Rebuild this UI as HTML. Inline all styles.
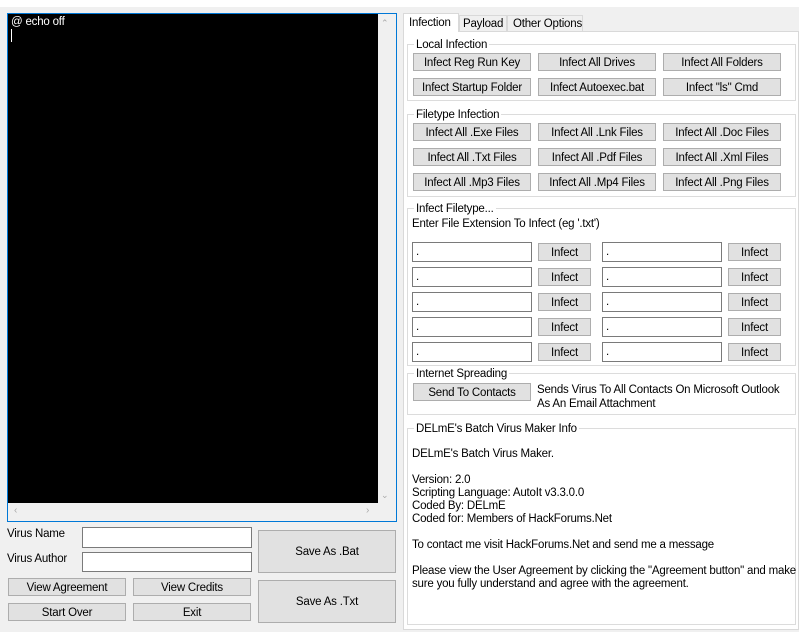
<!DOCTYPE html>
<html><head><style>
*{box-sizing:border-box;margin:0;padding:0}
body{width:799px;height:632px;background:#f0f0f0;font-family:"Liberation Sans",sans-serif;font-size:11.5px;letter-spacing:-0.2px;color:#000;position:relative;overflow:hidden}
.a{position:absolute;white-space:nowrap}
.btn{position:absolute;background:#e1e1e1;border:1px solid #adadad;display:flex;align-items:center;justify-content:center;white-space:nowrap;padding-top:1px}
.tb{position:absolute;background:#fff;border:1px solid #7a7a7a;padding-left:3px;line-height:18px}
.gb{position:absolute;border:1px solid #dcdcdc}
.gt{position:absolute;top:-7px;left:6px;padding:0 2px;background:#fff;line-height:14px;white-space:nowrap}
</style></head><body>
<div class="a" style="left:0;top:0;width:799px;height:7px;background:#fff"></div>
<div class="a" style="left:7px;top:13px;width:390px;height:509px;border:1px solid #0078d7;background:#f0f0f0"></div>
<div class="a" style="left:8px;top:14px;width:370px;height:489px;background:#000;color:#fff;padding:2px 3px">@ echo off<div style="width:1px;height:13px;background:#fff;margin-top:1px"></div></div>
<div class="a" style="left:381px;top:18px;color:#aaa;font-size:9px">&#8963;</div>
<div class="a" style="left:381px;top:490px;color:#aaa;font-size:9px">&#8964;</div>
<div class="a" style="left:14px;top:505px;color:#aaa;font-size:10px">&lsaquo;</div>
<div class="a" style="left:366px;top:505px;color:#aaa;font-size:10px">&rsaquo;</div>
<div class="a" style="left:7px;top:528px">Virus Name</div>
<div class="a" style="left:7px;top:553px">Virus Author</div>
<div class="tb" style="left:82px;top:527px;width:170px;height:21px"></div>
<div class="tb" style="left:82px;top:552px;width:170px;height:20px"></div>
<div class="btn" style="left:8px;top:578px;width:118px;height:18px">View Agreement</div>
<div class="btn" style="left:133px;top:578px;width:118px;height:18px">View Credits</div>
<div class="btn" style="left:8px;top:603px;width:118px;height:18px">Start Over</div>
<div class="btn" style="left:133px;top:603px;width:118px;height:18px">Exit</div>
<div class="btn" style="left:258px;top:530px;width:138px;height:43px">Save As .Bat</div>
<div class="btn" style="left:258px;top:580px;width:138px;height:43px">Save As .Txt</div>
<div class="a" style="left:403px;top:31px;width:396px;height:599px;background:#fff;border:1px solid #d9d9d9"></div>
<div class="a" style="left:403px;top:13px;width:56px;height:19px;background:#fff;border:1px solid #d9d9d9;border-bottom:none;padding:3px 0 0 5px">Infection</div>
<div class="a" style="left:459px;top:15px;width:48px;height:16px;background:#f0f0f0;border:1px solid #d9d9d9;border-bottom:none;padding:2px 0 0 3px">Payload</div>
<div class="a" style="left:507px;top:15px;width:76px;height:16px;background:#f0f0f0;border:1px solid #d9d9d9;border-bottom:none;padding:2px 0 0 5px">Other Options</div>
<div class="gb" style="left:407px;top:44px;width:389px;height:57px"><div class="gt">Local Infection</div></div>
<div class="btn" style="left:413px;top:53px;width:118px;height:18px">Infect Reg Run Key</div>
<div class="btn" style="left:538px;top:53px;width:118px;height:18px">Infect All Drives</div>
<div class="btn" style="left:663px;top:53px;width:118px;height:18px">Infect All Folders</div>
<div class="btn" style="left:413px;top:78px;width:118px;height:18px">Infect Startup Folder</div>
<div class="btn" style="left:538px;top:78px;width:118px;height:18px">Infect Autoexec.bat</div>
<div class="btn" style="left:663px;top:78px;width:118px;height:18px">Infect "ls" Cmd</div>
<div class="gb" style="left:407px;top:114px;width:389px;height:83px"><div class="gt">Filetype Infection</div></div>
<div class="btn" style="left:413px;top:123px;width:118px;height:18px">Infect All .Exe Files</div>
<div class="btn" style="left:538px;top:123px;width:118px;height:18px">Infect All .Lnk Files</div>
<div class="btn" style="left:663px;top:123px;width:118px;height:18px">Infect All .Doc Files</div>
<div class="btn" style="left:413px;top:148px;width:118px;height:18px">Infect All .Txt Files</div>
<div class="btn" style="left:538px;top:148px;width:118px;height:18px">Infect All .Pdf Files</div>
<div class="btn" style="left:663px;top:148px;width:118px;height:18px">Infect All .Xml Files</div>
<div class="btn" style="left:413px;top:173px;width:118px;height:18px">Infect All .Mp3 Files</div>
<div class="btn" style="left:538px;top:173px;width:118px;height:18px">Infect All .Mp4 Files</div>
<div class="btn" style="left:663px;top:173px;width:118px;height:18px">Infect All .Png Files</div>
<div class="gb" style="left:407px;top:208px;width:389px;height:158px"><div class="gt">Infect Filetype...</div></div>
<div class="a" style="left:412px;top:218px">Enter File Extension To Infect (eg '.txt')</div>
<div class="tb" style="left:412px;top:242px;width:120px;height:20px">.</div><div class="btn" style="left:538px;top:243px;width:53px;height:18px">Infect</div><div class="tb" style="left:602px;top:242px;width:120px;height:20px">.</div><div class="btn" style="left:728px;top:243px;width:53px;height:18px">Infect</div>
<div class="tb" style="left:412px;top:267px;width:120px;height:20px">.</div><div class="btn" style="left:538px;top:268px;width:53px;height:18px">Infect</div><div class="tb" style="left:602px;top:267px;width:120px;height:20px">.</div><div class="btn" style="left:728px;top:268px;width:53px;height:18px">Infect</div>
<div class="tb" style="left:412px;top:292px;width:120px;height:20px">.</div><div class="btn" style="left:538px;top:293px;width:53px;height:18px">Infect</div><div class="tb" style="left:602px;top:292px;width:120px;height:20px">.</div><div class="btn" style="left:728px;top:293px;width:53px;height:18px">Infect</div>
<div class="tb" style="left:412px;top:317px;width:120px;height:20px">.</div><div class="btn" style="left:538px;top:318px;width:53px;height:18px">Infect</div><div class="tb" style="left:602px;top:317px;width:120px;height:20px">.</div><div class="btn" style="left:728px;top:318px;width:53px;height:18px">Infect</div>
<div class="tb" style="left:412px;top:342px;width:120px;height:20px">.</div><div class="btn" style="left:538px;top:343px;width:53px;height:18px">Infect</div><div class="tb" style="left:602px;top:342px;width:120px;height:20px">.</div><div class="btn" style="left:728px;top:343px;width:53px;height:18px">Infect</div>
<div class="gb" style="left:407px;top:373px;width:389px;height:42px"><div class="gt">Internet Spreading</div></div>
<div class="btn" style="left:413px;top:383px;width:118px;height:18px">Send To Contacts</div>
<div class="a" style="left:537px;top:383px;line-height:14px">Sends Virus To All Contacts On Microsoft Outlook<br>As An Email Attachment</div>
<div class="gb" style="left:407px;top:428px;width:389px;height:197px"><div class="gt">DELmE's Batch Virus Maker Info</div></div>
<div class="a" style="left:412px;top:448px;line-height:13px">DELmE's Batch Virus Maker.<br><br>Version: 2.0<br>Scripting Language: AutoIt v3.3.0.0<br>Coded By: DELmE<br>Coded for: Members of HackForums.Net<br><br>To contact me visit HackForums.Net and send me a message<br><br>Please view the User Agreement by clicking the "Agreement button" and make<br>sure you fully understand and agree with the agreement.</div>
</body></html>
